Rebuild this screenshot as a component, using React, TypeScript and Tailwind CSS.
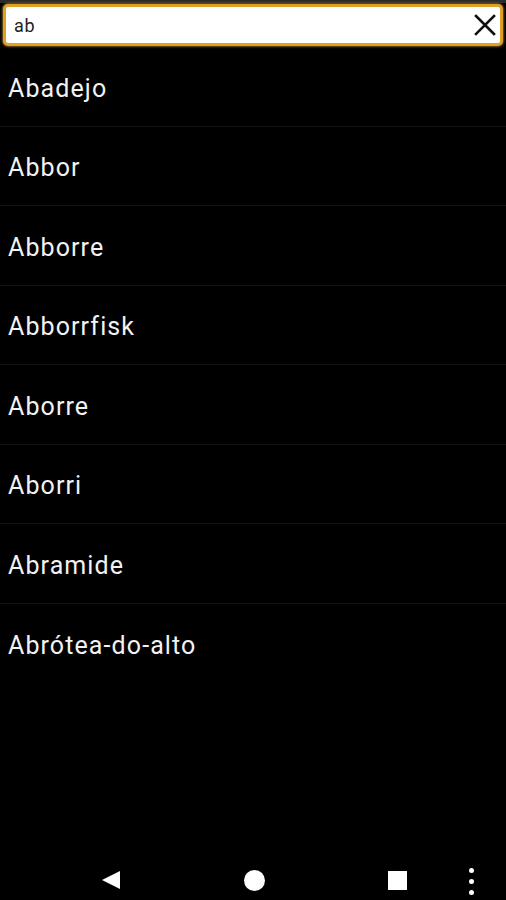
import React from 'react'

const items = ['Abadejo', 'Abbor', 'Abborre', 'Abborrfisk', 'Aborre', 'Aborri', 'Abramide', 'Abrótea-do-alto']

const App: React.FC = () => {
  return (
    <div className="flex h-[900px] w-[506px] flex-col bg-black font-['Roboto','Liberation_Sans',sans-serif] text-[#f2f2f2]">
      <div className="h-[3px] bg-[#2a2a2a]" />
      <div className="px-[3px] pt-[1px] pb-[1px]">
        <div className="flex h-[42px] items-center rounded-[5px] border-[3px] border-[#e0a028] bg-white pl-[8px] pr-[4px] shadow-[0_0_3px_#f5b540]">
          <span className="flex-1 text-[18px] tracking-[0.8px] text-[#222]">ab</span>
          <svg width="22" height="22" viewBox="0 0 22 22" className="ml-[2px]">
            <path d="M2 2 L20 20 M20 2 L2 20" stroke="#111" strokeWidth="2.6" strokeLinecap="square" />
          </svg>
        </div>
      </div>
      <ul className="flex-1">
        {items.map((name, i) => (
          <li
            key={name}
            className={`flex h-[79.5px] items-center pt-[4px] pl-[8px] text-[25px] tracking-[1.1px] ${i < items.length - 1 ? 'border-b border-[#141414]' : ''}`}
          >
            {name}
          </li>
        ))}
      </ul>
      <div className="flex h-[48px] items-center pb-[2px]">
        <div className="relative h-full w-full">
          <svg className="absolute left-[101px] top-[18px]" width="20" height="20" viewBox="0 0 20 20">
            <path d="M19 1 L19 19 L1 10 Z" fill="#fff" />
          </svg>
          <div className="absolute left-[244px] top-[18px] h-[21px] w-[21px] rounded-full bg-white" />
          <div className="absolute left-[388px] top-[19px] h-[19px] w-[19px] bg-white" />
          <div className="absolute left-[469px] top-[16px] flex flex-col gap-[6px]">
            <div className="h-[5px] w-[5px] rounded-full bg-white" />
            <div className="h-[5px] w-[5px] rounded-full bg-white" />
            <div className="h-[5px] w-[5px] rounded-full bg-white" />
          </div>
        </div>
      </div>
    </div>
  )
}

export default App
